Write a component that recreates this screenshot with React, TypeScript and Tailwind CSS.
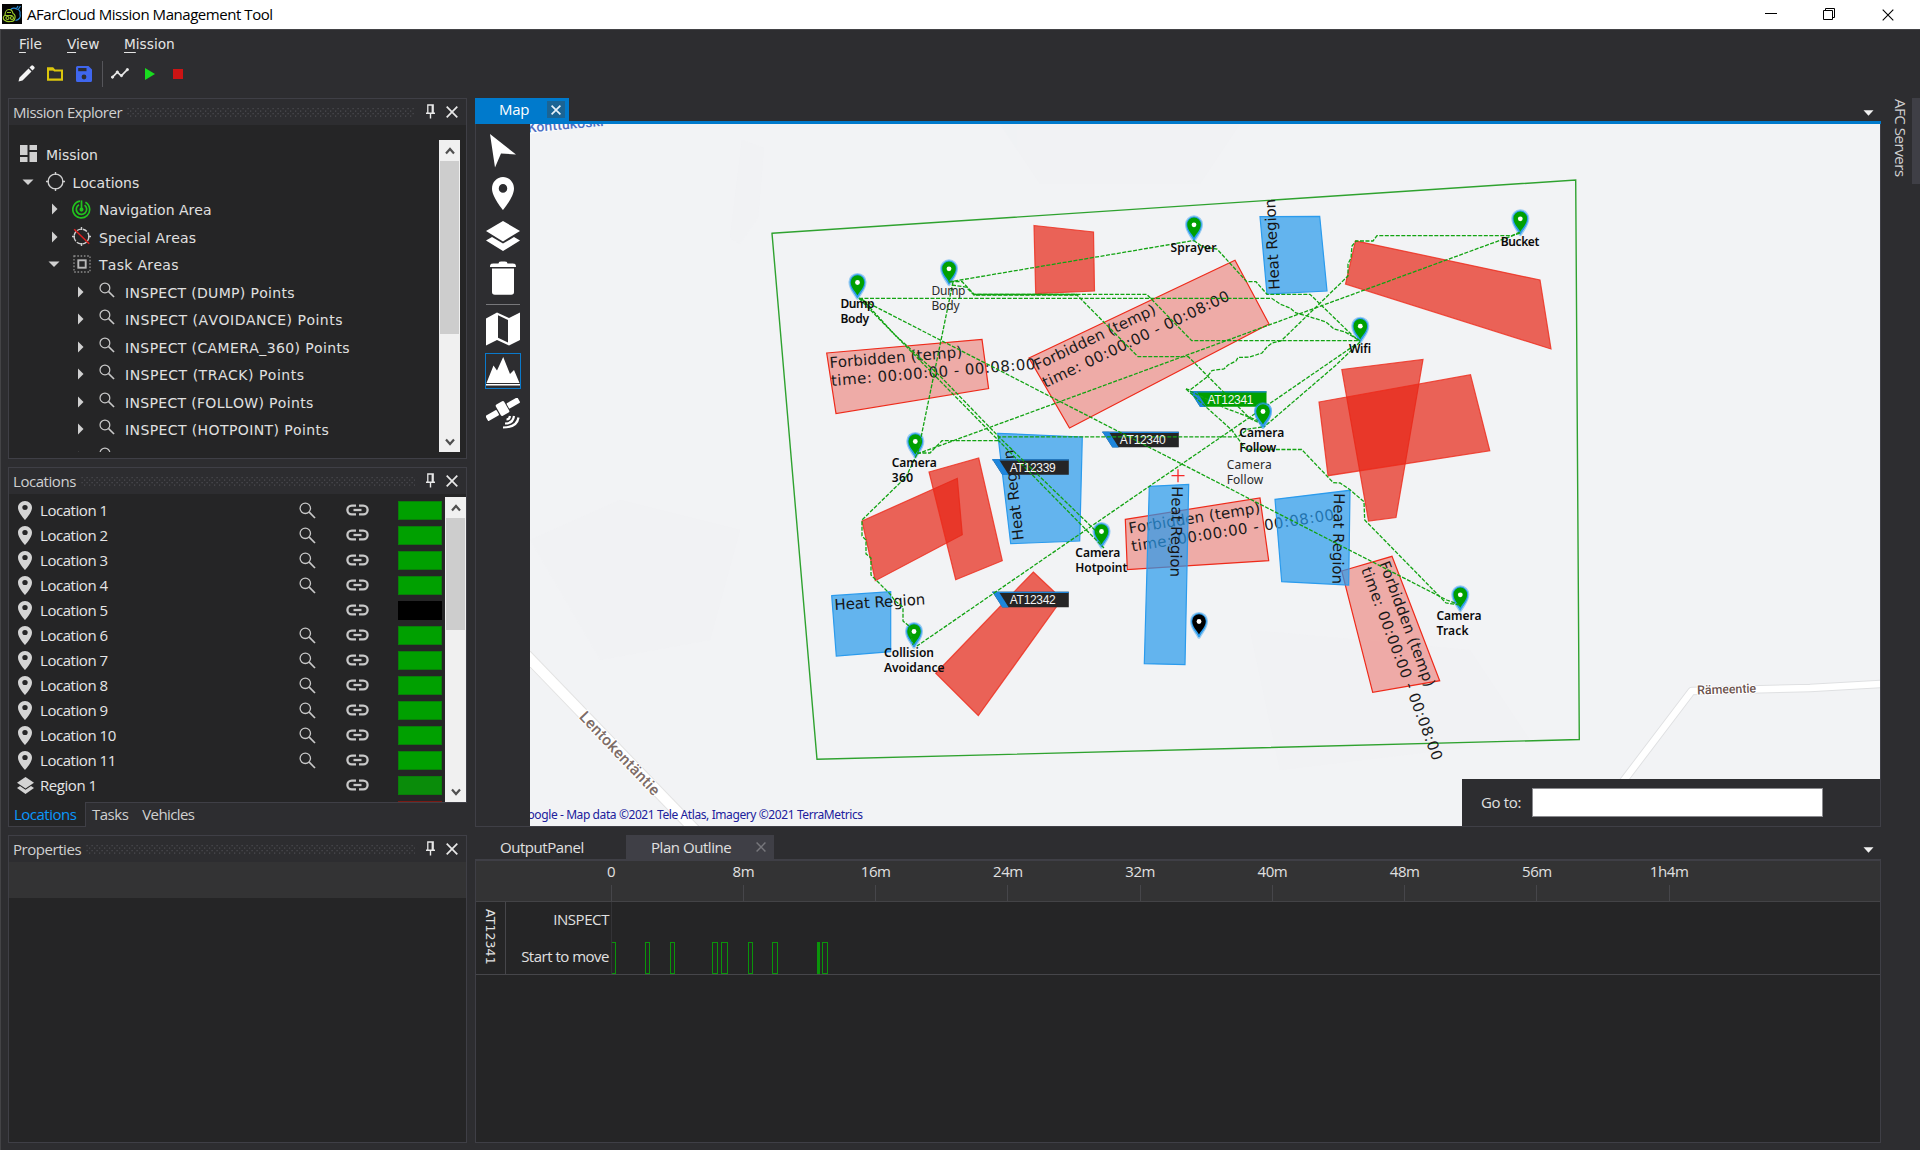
import React from "react";

type Pt = [number, number];

const SANS = "font-['Open_Sans','Noto_Sans',sans-serif]";
const WIDE = "font-['DejaVu_Sans',sans-serif]";

/* ---------- small icons ---------- */

const PinGlyph = ({ w, h, color }: { w: number; h: number; color: string }) => (
  <svg width={w} height={h} viewBox="5 2 14 20" preserveAspectRatio="none" fill={color}>
    <path d="M12 2C8.13 2 5 5.13 5 9c0 5.25 7 13 7 13s7-7.75 7-13c0-3.87-3.13-7-7-7zm0 9.6a2.7 2.7 0 1 1 0-5.4 2.7 2.7 0 0 1 0 5.4z" />
  </svg>
);

const Magnifier = ({ size = 17 }: { size?: number }) => (
  <svg width={size} height={size} viewBox="0 0 17 17" fill="none" stroke="#c8c8c8">
    <circle cx="6.3" cy="6.3" r="5.2" strokeWidth="1.3" />
    <path d="M10.2 10.2L16 16" strokeWidth="1.7" />
  </svg>
);

const ChainLink = () => (
  <svg width="23" height="12" viewBox="0 0 23 12" fill="none" stroke="#c8c8c8" strokeWidth="2.3">
    <path d="M10 1.6H5.8a4.4 4.4 0 0 0 0 8.8H10M13 1.6h4.2a4.4 4.4 0 0 1 0 8.8H13" />
    <path d="M7.5 6h8" />
  </svg>
);

const Arrow = ({ open }: { open?: boolean }) =>
  open ? (
    <svg width="12" height="8" viewBox="0 0 12 8"><path d="M0.5 1.5h11L6 7z" fill="#d0d0d0" /></svg>
  ) : (
    <svg width="7" height="12" viewBox="0 0 7 12"><path d="M1 0.5v11L6.5 6z" fill="#d0d0d0" /></svg>
  );

const Chevron = ({ up }: { up?: boolean }) => (
  <svg width="10" height="8" viewBox="0 0 10 8" fill="none" stroke="#505050" strokeWidth="2.2">
    <path d={up ? "M1 6.5L5 2l4 4.5" : "M1 1.5L5 6l4-4.5"} />
  </svg>
);

const Cross = ({ size, color, width = 1.6 }: { size: number; color: string; width?: number }) => (
  <svg width={size} height={size} viewBox="0 0 12 12" stroke={color} strokeWidth={width}>
    <path d="M0.7 0.7l10.6 10.6M11.3 0.7L0.7 11.3" />
  </svg>
);

const Thumbtack = () => (
  <svg width="9" height="15" viewBox="0 0 9 15" fill="none" stroke="#e8e8e8">
    <path d="M1.8 9V1h5.4v8" strokeWidth="1.3" />
    <path d="M6.3 1v8" strokeWidth="1.4" />
    <path d="M0 9.2h9M4.5 9.2V14.6" strokeWidth="1.4" />
  </svg>
);

const DropTriangle = () => (
  <svg width="11" height="6" viewBox="0 0 11 6"><path d="M0.5 0.3h10L5.5 5.8z" fill="#f1f1f1" /></svg>
);

const MissionIcon = () => (
  <svg width="17" height="17" viewBox="0 0 17 17" fill="#d0d0d0">
    <path d="M0 0h7.5v10H0zM9.5 0H17v5H9.5zM0 12h7.5v5H0zM9.5 7H17v10H9.5z" />
  </svg>
);

const TargetIcon = ({ slashed }: { slashed?: boolean }) => (
  <svg width="19" height="19" viewBox="0 0 19 19" fill="none" stroke="#cfcfcf" strokeWidth="1.4">
    <circle cx="9.5" cy="9.5" r="7.4" strokeDasharray={slashed ? "4.6 1.4" : undefined} />
    <path d="M9.5 0v3M9.5 16v3M0 9.5h3M16 9.5h3" />
    {slashed && <path d="M2.2 2.2l15 14.6" stroke="#e02020" strokeWidth="1.5" />}
  </svg>
);

const RadarIcon = () => (
  <svg width="19" height="19" viewBox="0 0 19 19" fill="none" stroke="#22c31e" strokeWidth="1.7">
    <path d="M8 1.2a8.4 8.4 0 1 0 5.4 1" />
    <path d="M9.5 9.5V0.4" />
    <path d="M7 4.7a5.2 5.2 0 1 0 5.6 .4" />
    <circle cx="9.5" cy="9.6" r="1.2" fill="#22c31e" />
  </svg>
);

const SelectIcon = () => (
  <svg width="18" height="18" viewBox="0 0 18 18" fill="none" stroke="#b8b8b8">
    <rect x="1" y="1" width="16" height="16" strokeWidth="1.3" strokeDasharray="1.6 1.7" stroke="#8c8c8c" />
    <rect x="5.3" y="5.3" width="7.4" height="7.4" strokeWidth="1.9" />
  </svg>
);

const LayersGlyph = ({ w, h, color }: { w: number; h: number; color: string }) => (
  <svg width={w} height={h} viewBox="0 0 34 30" fill={color} preserveAspectRatio="none">
    <path d="M17 0l17 10-17 10.4L0 10z" />
    <path d="M0 19.5l6-3.4 11 6.5 11-6.5 6 3.4L17 30z" />
  </svg>
);

/* ---------- title, menu, toolbar ---------- */

const TitleBar = () => (
  <div className="flex h-[29px] shrink-0 items-center bg-white pl-[2px] text-black">
    <svg width="20" height="20" viewBox="0 0 20 20" className="mb-px">
      <rect width="20" height="20" fill="#050505" />
      <g fill="none" strokeWidth="1.2">
        <path d="M8.500 6c1-2 4.500-2.500 6-1 3 .5 4 2.500 3.500 5 1 3-.5 6-4.500 6.500" stroke="#2a8fd8" />
        <path d="M14.500 4.500l1.500-2.500M16.500 5l2-3" stroke="#2a8fd8" />
        <path d="M3 16.500c-2.500-1-2-4.500 0-5 0-3 1.500-6 4-6 2.500 0 3.500 1.500 4 4 2 1 2.500 3.500 1.500 6-.5 1.500-2 2-4 2-2 .3-4 0-5.500-1z" stroke="#9ccb2a" />
        <path d="M2.500 11.500h8M5 8.500h4" stroke="#9ccb2a" />
        <circle cx="5.500" cy="14" r="1.500" stroke="#9ccb2a" />
        <circle cx="10" cy="14" r="1.500" stroke="#9ccb2a" />
      </g>
    </svg>
    <span className={`${SANS} ml-[5px] text-[15px] tracking-[-0.45px]`}>AFarCloud Mission Management Tool</span>
    <div className="ml-auto flex h-full items-center pr-[26px]">
      <svg width="12" height="13" viewBox="0 0 12 13"><path d="M0 5.500h12" stroke="#000" /></svg>
      <svg width="13" height="13" viewBox="0 0 13 13" className="ml-[46px]" fill="none" stroke="#000">
        <path d="M0.500 2.500h9v9h-9zM2.500 2.500v-2h9v9h-2" />
      </svg>
      <div className="ml-[46px]"><Cross size={12} color="#000" width={1.1} /></div>
    </div>
  </div>
);

const MenuBar = () => (
  <div className={`${WIDE} flex h-[28px] items-center pl-[18px] text-[13.700px] text-[#e4e4e4]`}>
    {["File", "View", "Mission"].map((m, i) => (
      <span key={m} className={i === 0 ? "w-[48px]" : i === 1 ? "w-[57px]" : ""}>
        <span className="underline underline-offset-[3px]">{m[0]}</span>{m.slice(1)}
      </span>
    ))}
  </div>
);

const ToolBar = () => (
  <div className="flex h-[31px] items-center pl-[17px]">
    <svg width="17" height="17" viewBox="0 0 17 17" fill="#f4f4f4">
      <path d="M0.500 16.500l1-4 9-9 3 3-9 9zM11.500 2.500l1.700-1.700a1.500 1.500 0 0 1 2 0l1 1a1.500 1.500 0 0 1 0 2L14.500 5.500z" />
    </svg>
    <svg width="16" height="14" viewBox="0 0 17 15" className="ml-[12px]" fill="none" stroke="#dcc60c" strokeWidth="2.2">
      <path d="M1 1.500h5l2 2.200h8v9.800H1z" /><path d="M1 2.800h6" />
    </svg>
    <svg width="16" height="16" viewBox="0 0 16 16" className="ml-[13px]" fill="#3f66ee">
      <path d="M1.500 0h11L16 3.500v11a1.500 1.500 0 0 1-1.500 1.500h-13A1.500 1.500 0 0 1 0 14.500v-13A1.500 1.500 0 0 1 1.500 0z" />
      <path d="M2.200 2h8.300v3.200H2.200z" fill="#2d2d30" /><circle cx="8" cy="11" r="2.400" fill="#2d2d30" />
    </svg>
    <div className="ml-[10px] h-[26px] w-px bg-[#55555a]" />
    <svg width="18" height="11" viewBox="0 0 18 11" className="ml-[8px]" stroke="#e8e8e8" fill="#e8e8e8">
      <path d="M1.500 9.200l4.800-5 4 3.600 6-6.200" fill="none" strokeWidth="1.700" />
      <circle cx="1.500" cy="9.200" r="1.100" /><circle cx="6.300" cy="4" r="1.100" /><circle cx="10.500" cy="7.600" r="1.100" /><circle cx="16.400" cy="1.600" r="1.100" />
    </svg>
    <svg width="10" height="12" viewBox="0 0 10 12" className="ml-[16px]"><path d="M0 0v12l10-6z" fill="#19dc1f" /></svg>
    <div className="ml-[18px] h-[10px] w-[10px] bg-[#cc1414]" />
  </div>
);

/* ---------- left column ---------- */

const PanelHeader = ({ title, id }: { title: string; id: string }) => (
  <div className={`${SANS} flex h-[26px] shrink-0 items-center bg-[#2d2d30] pl-[4px] pr-[8px] text-[15px] tracking-[-0.450px] text-[#d0d0d0]`}>
    <span className="pb-px leading-[24px]">{title}</span>
    <svg className="ml-[5px] mr-[11px] h-[9px] min-w-0 flex-1" width="100%" height="9">
      <defs>
        <pattern id={id} width="5" height="5" patternUnits="userSpaceOnUse">
          <rect x="0.500" y="0" width="1.200" height="1.200" fill="#4c4c51" />
          <rect x="3" y="2.500" width="1.200" height="1.200" fill="#4c4c51" />
        </pattern>
      </defs>
      <rect width="100%" height="9" fill={`url(#${id})`} />
    </svg>
    <div className="mb-px flex items-center gap-[11px]">
      <Thumbtack />
      <Cross size={12} color="#e8e8e8" width={1.700} />
    </div>
  </div>
);

const ScrollBar = ({ thumb }: { thumb: string }) => (
  <div className="flex w-[21px] shrink-0 flex-col items-center bg-[#f0f0f0]">
    <div className="flex h-[21px] shrink-0 items-center"><Chevron up /></div>
    <div className={`w-[19px] bg-[#cdcdcd] ${thumb}`} />
    <div className="mt-auto flex h-[21px] items-center"><Chevron /></div>
  </div>
);

type TreeItem = { level: number; label: string; open?: boolean; icon: React.ReactNode; spacing?: string };
const TASK_KINDS: [string, string][] = [
  ["DUMP", "tracking-[0.330px]"],
  ["AVOIDANCE", "tracking-[0.490px]"],
  ["CAMERA_360", "tracking-[0.380px]"],
  ["TRACK", "tracking-[0.510px]"],
  ["FOLLOW", "tracking-[0.330px]"],
  ["HOTPOINT", "tracking-[0.400px]"],
];
const TREE: TreeItem[] = [
  { level: 1, label: "Locations", open: true, icon: <TargetIcon /> },
  { level: 2, label: "Navigation Area", icon: <RadarIcon /> },
  { level: 2, label: "Special Areas", icon: <TargetIcon slashed />, spacing: "tracking-[0.200px]" },
  { level: 2, label: "Task Areas", open: true, icon: <SelectIcon />, spacing: "tracking-[0.300px]" },
  ...TASK_KINDS.map(([n, spacing]) => ({
    level: 3,
    label: `INSPECT (${n}) Points`,
    icon: <div className="-ml-px -mt-[4px]"><Magnifier size={16} /></div>,
    spacing,
  })),
  { level: 3, label: "", icon: <div className="-ml-px -mt-[4px]"><Magnifier size={16} /></div> },
];
const INDENT = ["", "pl-[9.500px]", "pl-[36px]", "pl-[62px]"];

const MissionExplorer = () => (
  <section className="flex h-[361px] shrink-0 flex-col border border-[#3f3f46] bg-[#252526]">
    <PanelHeader title="Mission Explorer" id="grip-a" />
    <div className="mb-[6px] mt-[15px] flex min-h-0 flex-1 pr-[6px]">
      <div className={`${WIDE} min-w-0 flex-1 overflow-hidden pt-[1.500px] text-[14px] text-[#e0e0e0] [font-kerning:none]`}>
        <div className="flex h-[27.500px] items-center pl-[11px]">
          <div className="-mt-[3px] w-[26px]"><MissionIcon /></div>
          <span className="mt-px">Mission</span>
        </div>
        {TREE.map((t) => (
          <div key={t.label} className={`flex h-[27.500px] items-center ${INDENT[t.level]}`}>
            <div className="-mt-[2px] flex w-[18px] justify-center"><Arrow open={t.open} /></div>
            <div className="-mt-[2px] ml-[5px] flex w-[27px] justify-center">{t.icon}</div>
            <span className={`ml-[4px] mt-px whitespace-nowrap ${t.spacing ?? ""}`}>{t.label}</span>
          </div>
        ))}
      </div>
      <ScrollBar thumb="h-[173px]" />
    </div>
  </section>
);

const LocationRow = ({ label, swatch, search, region }: { label: string; swatch: string; search?: boolean; region?: boolean }) => (
  <div className="flex h-[25px] shrink-0 items-center pl-[7px]">
    <div className="flex w-[18px] justify-center">
      {region ? <LayersGlyph w={17} h={17} color="#d4d4d4" /> : <PinGlyph w={14} h={19} color="#d4d4d4" />}
    </div>
    <span className="ml-[6px] w-[257px] whitespace-nowrap">{label}</span>
    <div className="flex w-[20px] justify-center">{search && <Magnifier />}</div>
    <div className="ml-[28px] flex w-[24px] justify-center"><ChainLink /></div>
    <div className={`ml-[29px] h-[19px] w-[44px] ${swatch}`} />
  </div>
);

const LocationsPanel = () => (
  <section className="mt-[8px] flex h-[360px] shrink-0 flex-col">
    <div className="flex h-[335px] flex-col border border-b-0 border-[#3f3f46] bg-[#252526]">
      <PanelHeader title="Locations" id="grip-b" />
      <div className="flex min-h-0 flex-1 pt-[3px]">
        <div className={`${SANS} flex min-w-0 flex-1 flex-col overflow-hidden pt-[0.500px] text-[15px] tracking-[-0.450px] text-[#e6e6e6]`}>
          {Array.from({ length: 11 }, (_, i) => (
            <LocationRow
              key={i}
              label={`Location ${i + 1}`}
              search={i !== 4}
              swatch={i === 4 ? "bg-black" : "border border-[#0a7d0a] bg-[#00a000]"}
            />
          ))}
          <LocationRow label="Region 1" region swatch="border border-[#0a7d0a] bg-[#0a8c0a]" />
          <LocationRow label="" region swatch="border border-[#7a1a14] bg-[#9a2018]" />
        </div>
        <ScrollBar thumb="h-[112px]" />
      </div>
    </div>
    <div className={`${SANS} flex h-[25px] text-[15px] tracking-[-0.500px] text-[#d0d0d0]`}>
      <div className="w-[78px] border border-t-0 border-[#3f3f46] bg-[#252526] pl-[5px] leading-[24px] text-[#0a97fb]">Locations</div>
      <div className="flex-1 border-t border-[#3f3f46] pl-[6px] leading-[23px]">
        <span>Tasks</span><span className="ml-[14px] tracking-[-0.600px]">Vehicles</span>
      </div>
    </div>
  </section>
);

const PropertiesPanel = () => (
  <section className="mt-[8px] flex h-[308px] shrink-0 flex-col border border-[#3f3f46] bg-[#252526]">
    <PanelHeader title="Properties" id="grip-c" />
    <div className="h-[36px] bg-[#333334]" />
  </section>
);

/* ---------- map ---------- */

const pts = (p: Pt[]) => p.map((q) => q.join(",")).join(" ");

const FORBIDDEN: Pt[][] = [
  [[826.7, 353], [982, 339.3], [988.6, 388.6], [836, 413.5]],
  [[1029, 358], [1235, 260.3], [1269, 324], [1069.5, 428]],
  [[1125.3, 519.3], [1260, 498], [1268.7, 560.7], [1127.3, 569.7]],
  [[1341.7, 571], [1392, 556.3], [1439.7, 680.7], [1372.7, 692.3]],
];
const FORBIDDEN_TEXT = [
  { a: [830, 368], b: [831.5, 386], r: -4.8 },
  { a: [1037, 370.5], b: [1045.5, 388], r: -25.5 },
  { a: [1129.5, 533.5], b: [1132.3, 551.5], r: -9 },
  { a: [1379, 563.5], b: [1361, 569.5], r: 69.4 },
];
const RED: Pt[][] = [
  [[1034, 225.5], [1093.5, 232], [1094.5, 291], [1035.7, 293.5]],
  [[1355.5, 240.8], [1540, 280], [1551, 349], [1345.5, 284]],
  [[1341.8, 369.5], [1423, 359.5], [1396, 517.5], [1368.5, 521]],
  [[1319, 402], [1470.5, 374.7], [1489.8, 450.8], [1328, 475.7]],
  [[862, 521], [957.3, 478.3], [962.3, 534.7], [875.3, 580.7]],
  [[929, 472], [978.7, 458], [1002.3, 560.7], [955.7, 579.7]],
  [[1033.3, 572], [1062, 599], [978.3, 715.7], [935.7, 673.3]],
];
const HEAT: Pt[][] = [
  [[1260, 216.7], [1319.7, 216.3], [1327, 291], [1267, 294]],
  [[997.7, 433.3], [1082.3, 437], [1079.7, 541], [1010.7, 543.7]],
  [[831.7, 595.7], [890.7, 591.7], [890.7, 651.7], [836.3, 656]],
  [[1149.3, 486.3], [1188.7, 484.3], [1185, 664.7], [1144.3, 663.7]],
  [[1275, 499.3], [1350, 490.3], [1348.7, 585], [1281.7, 581.7]],
];
const HEAT_TEXT = [
  { x: 1279.7, y: 289.5, r: -93 },
  { x: 1023.7, y: 539.7, r: -96.4 },
  { x: 834.7, y: 610, r: -3.5 },
  { x: 1172, y: 486, r: 91 },
  { x: 1334, y: 493, r: 91 },
];
const ROUTES: Pt[][] = [
  [[948.7, 282], [1193.7, 240.5]],
  [[950, 281.5], [962, 281.5], [974, 294.3], [1146.7, 294.3], [1191.7, 340.7], [1360, 340.7]],
  [[952, 285], [966, 287], [974, 295], [1077, 295], [1138, 356.7], [1188.3, 356.7], [1250, 418.5], [1262, 424]],
  [[859, 298.3], [1271.7, 298.3], [1280, 304], [1290, 308], [1296, 313], [1306, 315.7], [1320, 320], [1326, 322], [1334, 329], [1345, 332], [1352, 336], [1360, 341]],
  [[859, 298.3], [1446.7, 600], [1460, 605]],
  [[859, 298.3], [1104, 548]],
  [[862, 299], [895, 335], [940, 376], [1000, 438], [1099, 534]],
  [[953, 282], [918, 452], [906, 477], [862, 520], [862, 536], [866, 540], [866, 554], [871, 558], [871, 575], [890, 594], [895, 601], [903, 607], [903, 621], [909, 626], [913, 645]],
  [[917, 454], [1520, 233]],
  [[917, 453], [930, 453], [942, 440.7], [998, 440.7], [999, 436.8], [1238, 436.8], [1248, 429], [1262, 427]],
  [[1355, 345], [917, 646]],
  [[1360, 342], [1335, 366], [1264, 427]],
  [[1193.7, 240.5], [1203, 247], [1217, 249], [1246.7, 281.7], [1256, 281.7], [1267, 294.3], [1310, 294.3], [1353, 336], [1360, 341]],
  [[1520, 232], [1512, 235.7], [1377, 235.7], [1373, 241], [1356, 241], [1352, 246], [1351, 258], [1348, 264], [1348, 276], [1281, 341], [1272, 343], [1267, 347], [1262, 353], [1250, 357], [1238, 357.5], [1236, 361], [1228, 365], [1224, 369], [1212, 370.5], [1207, 377], [1190, 390], [1186, 389]],
  [[1186, 389], [1231.7, 430], [1246, 449.5], [1301.7, 449.5], [1333.3, 482.7], [1340, 483], [1349, 489], [1364, 501.7], [1364.7, 520], [1446, 603], [1460, 605]],
  [[1190, 391], [1225, 408], [1262, 422]],
];
const PINS: Pt[] = [
  [857.5, 283], [949, 269.3], [915.3, 442], [1194, 225.3], [1520.3, 219.3], [1360.3, 326.7],
  [1263, 412], [1101.5, 532], [914, 632], [1460.3, 595.3],
];
type Label = { x: number; y: number; lines: [string, number][]; light?: boolean };
const LABELS: Label[] = [
  { x: 840.5, y: 308, lines: [["Dump", 34], ["Body", 28.5]] },
  { x: 931.5, y: 294.5, lines: [["Dump", 34], ["Body", 28]], light: true },
  { x: 891.7, y: 466.5, lines: [["Camera", 45], ["360", 21.5]] },
  { x: 1170.5, y: 251.5, lines: [["Sprayer", 46]] },
  { x: 1500.7, y: 245.5, lines: [["Bucket", 38.7]] },
  { x: 1349, y: 352.5, lines: [["Wifi", 22]] },
  { x: 1239.3, y: 436.5, lines: [["Camera", 45], ["Follow", 37]] },
  { x: 1226.7, y: 469, lines: [["Camera", 45], ["Follow", 36.5]], light: true },
  { x: 1075.3, y: 556.5, lines: [["Camera", 45], ["Hotpoint", 52]] },
  { x: 884, y: 656.5, lines: [["Collision", 50], ["Avoidance", 60.5]] },
  { x: 1436.5, y: 620.3, lines: [["Camera", 45], ["Track", 32]] },
];
const TAGS = [
  { x: 1102.3, y: 431.7, t: "AT12340", fill: "#252526" },
  { x: 992.3, y: 459.3, t: "AT12339", fill: "#252526" },
  { x: 992.3, y: 591.7, t: "AT12342", fill: "#252526" },
  { x: 1190, y: 391.3, t: "AT12341", fill: "#00a000" },
];

const MapPin = ({ at: [x, y], color }: { at: Pt; color: string }) => {
  const d = "M0 15C-2.500 10-7.300 6-7.300-1A7.300 7.300 0 0 1 7.300-1C7.300 6 2.500 10 0 15z";
  return (
    <g transform={`translate(${x} ${y})`}>
      <path d={d} fill="#2b9bed" stroke="#2b9bed" strokeWidth="3.500" strokeLinejoin="round" opacity="0.450" />
      <path d={d} fill="#2b9bed" stroke="#2b9bed" strokeWidth="1" strokeLinejoin="round" />
      <path d="M0 12.500C-2 8.500-6.800 5-6.800-1A6.800 6.800 0 0 1 6.800-1C6.800 5 2 8.500 0 12.500z" fill={color} />
      <circle r="2.400" cy="-0.500" fill="#fff" />
    </g>
  );
};

const MapView = () => (
  <svg width="1350" height="702" viewBox="530 124 1350 702" className="block bg-[#f2f3f5]">
    <g fill="#eef0f2" opacity="0.250">
      <path d="M742 140l22 8-6 70-18 26-10 -6z" />
      <path d="M530 540l90-40 120 30-30 110-110 20z" />
      <path d="M1250 630l220 20 60 90-250 30z" />
      <path d="M1000 124h240l-40 60h-160z" />
    </g>
    <g fill="none" strokeLinejoin="round">
      <path d="M520 648.600L710 845.600" stroke="#e3e3e3" strokeWidth="12" />
      <path d="M520 648.600L710 845.600" stroke="#fff" strokeWidth="10" />
      <path d="M1612 796L1691.700 691L1810 688L1890 683.500" stroke="#dfe0e2" strokeWidth="8.500" />
      <path d="M1612 796L1691.700 691L1810 688L1890 683.500" stroke="#fff" strokeWidth="6.600" />
    </g>
    <path d="M530 124h72l-72 10z" fill="#fff" opacity="0.700" />
    <text transform="translate(528 132.500) rotate(-5)" className="font-['Roboto',sans-serif] text-[14px] font-medium" fill="#4d6fc4" textLength="76">Konttukoski</text>
    <text transform="translate(578.500 717.500) rotate(46.500)" className="font-['Roboto',sans-serif] text-[15.500px] font-medium" fill="#7d6c67" stroke="#fff" strokeWidth="2" paintOrder="stroke" textLength="109">Lentokentäntie</text>
    <text transform="translate(1697.300 694.500) rotate(-2)" className="font-['Roboto',sans-serif] text-[12.500px] font-medium" fill="#6d5550" stroke="#fff" strokeWidth="2" paintOrder="stroke" textLength="59">Rämeentie</text>

    <polygon points="772,233.300 1575.700,180 1579.300,739.500 817,759.300" fill="none" stroke="#2fa22f" strokeWidth="1.400" />

    <g fill="#e72616" stroke="#ee2a1a" strokeWidth="1.200">
      {FORBIDDEN.map((p, i) => <polygon key={i} points={pts(p)} fillOpacity="0.350" />)}
      {RED.map((p, i) => <polygon key={i} points={pts(p)} fillOpacity="0.710" strokeOpacity="0.800" />)}
    </g>
    <g className="font-['DejaVu_Sans',sans-serif] text-[15px]" fill="#1a1a1a">
      {FORBIDDEN_TEXT.map(({ a, b, r }, i) => (
        <g key={i}>
          <text transform={`translate(${a[0]} ${a[1]}) rotate(${r})`} textLength="133">Forbidden (temp)</text>
          <text transform={`translate(${b[0]} ${b[1]}) rotate(${r})`} textLength="205">time: 00:00:00 - 00:08:00</text>
        </g>
      ))}
    </g>
    <g fill="#2799eb" stroke="#2b9bed" strokeWidth="1.200">
      {HEAT.map((p, i) => <polygon key={i} points={pts(p)} fillOpacity="0.700" />)}
    </g>
    <g className="font-['DejaVu_Sans',sans-serif] text-[15px]" fill="#151515">
      {HEAT_TEXT.map(({ x, y, r }, i) => (
        <text key={i} transform={`translate(${x} ${y}) rotate(${r})`} textLength="91">Heat Region</text>
      ))}
    </g>

    {PINS.map((p, i) => <MapPin key={i} at={p} color="#00a000" />)}
    <MapPin at={[1199, 622]} color="#000" />

    {TAGS.map(({ x, y, t, fill }) => (
      <g key={t} transform={`translate(${x} ${y})`}>
        <path d="M0 0H76.500V15.500H10z" fill={fill} />
        <path d="M0 0H6.500L16.500 15.700H10z" fill="#1e86dc" />
        <path d="M0 0H76.500V1.300H0z" fill="#1e86dc" />
      </g>
    ))}
    <g fill="none" stroke="#12a312" strokeWidth="1.300" strokeDasharray="4 1.500">
      {ROUTES.map((p, i) => <polyline key={i} points={pts(p)} />)}
    </g>
    <path d="M974 294.500H1077" stroke="#12a312" strokeWidth="1.300" />
    {TAGS.map(({ x, y, t }) => (
      <text key={t} x={x + 17.500} y={y + 12.200} className="font-['Liberation_Sans',sans-serif] text-[12px]" fill="#f4f4f4" textLength="46">{t}</text>
    ))}
    <MapPin at={PINS[6]} color="#00a000" />
    {LABELS.map(({ x, y, lines, light }, i) => (
      <g key={i} className={light ? "font-['Noto_Sans',sans-serif] text-[12px]" : "font-['Noto_Sans',sans-serif] text-[12px] font-semibold"} fill={light ? "#2a2a2a" : "#0a0a0a"}>
        {lines.map(([t, w], j) => <text key={t} x={x} y={y + j * 15} textLength={w}>{t}</text>)}
      </g>
    ))}
    <path d="M1171.500 475.700h13M1178 469.200v13" stroke="#f52a2a" strokeWidth="1.300" />
    <text x="527.500" y="819" className="font-['Noto_Sans',sans-serif] text-[12px]" fill="#20209c" textLength="335.500">oogle - Map data ©2021 Tele Atlas, Imagery ©2021 TerraMetrics</text>
  </svg>
);

const MapTools = () => (
  <div className="flex w-[54px] shrink-0 flex-col items-center">
    <svg width="28" height="34" viewBox="0 0 28 34" fill="#fff" className="mt-[10px]"><path d="M1 0L27 20.500L12 19.500L6 33.500z" /></svg>
    <div className="mt-[9px] h-[34px]"><PinGlyph w={22} h={33} color="#fff" /></div>
    <div className="mt-[10px] h-[30px]"><LayersGlyph w={34} h={30} color="#fff" /></div>
    <svg width="26" height="34" viewBox="0 0 26 34" fill="#fff" className="mt-[10px]">
      <path d="M0 6c0-3 1-3.500 4-3.500h4.500C9 .8 9.500.500 13 .500s4 .3 4.500 2H22c3 0 4 .5 4 3.500z" />
      <path d="M2 7.500h22V31a2.800 2.800 0 0 1-2.800 2.800H4.800A2.800 2.800 0 0 1 2 31z" />
    </svg>
    <div className="mt-[9px] h-px w-[34px] bg-[#77777a]" />
    <svg width="34" height="34" viewBox="0 0 34 34" fill="#fff" className="mt-[7px]">
      <path d="M0 6.500L11 .500L23 6L34 .500V28L23 33.500L11 28L0 33.500z" />
      <path d="M12 3.300L22 8V30.500L12 25.800z" fill="#2d2d30" />
    </svg>
    <div className="mt-[7px] flex h-[36px] w-[36px] items-end justify-center border border-[#0a7acc] pb-[2px]">
      <svg width="34" height="29" viewBox="0 0 34 29" fill="#fff">
        <path d="M0.500 26L7.500 8.500L11 13.500L17.200 0L24 17L28 13L33.500 26z" /><path d="M0 27h34v1.400H0z" />
      </svg>
    </div>
    <svg width="34" height="31" viewBox="0 0 34 31" fill="#fff" className="mt-[9px]">
      <rect x="-4.800" y="-6.500" width="9.600" height="13" rx="1.500" transform="translate(16.500 10.500) rotate(-30)" />
      <rect x="-6.300" y="-3" width="12.600" height="6" rx="1" transform="translate(27.300 5) rotate(-30)" />
      <rect x="-6.300" y="-3" width="12.600" height="6" rx="1" transform="translate(6.300 17.500) rotate(-30)" />
      <g fill="none" stroke="#fff" strokeWidth="2.200">
        <path d="M20.500 21.500q3 0 3.500-3.500" /><path d="M19 25.500q8 0 9-7.500" /><path d="M17 29.500q14 0 15.500-10" />
      </g>
    </svg>
  </div>
);

const MapPane = () => (
  <section className="flex h-[729px] shrink-0 flex-col">
    <div className={`${SANS} flex h-[23px] items-center`}>
      <div className="flex h-full w-[94px] items-center bg-[#007acc] pr-[4px] text-[15px] tracking-[-0.300px] text-white">
        <span className="ml-[24px]">Map</span>
        <div className="ml-auto flex h-[17px] w-[18px] items-center justify-center bg-[#1b6494]"><Cross size={10} color="#e8f2fa" width={2} /></div>
      </div>
      <div className="ml-auto mr-[7px] mt-[6px]"><DropTriangle /></div>
    </div>
    <div className="h-[3px] shrink-0 bg-[#007acc]" />
    <div className="flex h-[703px] border border-t-0 border-[#3f3f46]">
      <MapTools />
      <div className="relative">
        <MapView />
        <div className={`${SANS} absolute bottom-0 right-0 flex h-[47px] w-[418px] items-center bg-[#2d2d30] pl-[19px] text-[15px] tracking-[-0.350px] text-[#e0e0e0]`}>
          <span className="w-[51px] whitespace-nowrap pb-px">Go to:</span>
          <div className="mb-px h-[29px] w-[291px] border border-[#8a8a8e] bg-white" />
        </div>
      </div>
    </div>
  </section>
);

/* ---------- timeline ---------- */

const TICKS = ["0", "8m", "16m", "24m", "32m", "40m", "48m", "56m", "1h4m"];
/* [gap before, width] of each move block, in pixels from the origin of the axis */
const MOVES: Pt[] = [[0, 4], [29, 5], [20, 5], [37, 6], [3, 7], [20, 5], [19, 6], [39, 3], [2, 6]];

const Timeline = () => (
  <section className="mt-[8px] flex min-h-0 flex-col">
    <div className={`${SANS} flex h-[24px] shrink-0 items-center text-[15px] tracking-[-0.450px] text-[#e0e0e0]`}>
      <span className="w-[151px] pl-[25px]">OutputPanel</span>
      <div className="flex h-full w-[148px] items-center bg-[#3f3f46] pl-[25px]">
        <span>Plan Outline</span>
        <div className="ml-auto mr-[8px]"><Cross size={10} color="#77777c" width={1.800} /></div>
      </div>
      <div className="ml-auto mr-[7px] mt-[5px]"><DropTriangle /></div>
    </div>
    <div className={`${SANS} flex h-[284px] flex-col border border-[#3f3f46] border-t-2 bg-[#252526] text-[15px] tracking-[-0.420px] text-[#e0e0e0]`}>
      <div className="flex h-[41px] shrink-0 border-b border-[#434346] bg-[#333334] pl-[69px]">
        {TICKS.map((t) => (
          <div key={t} className="flex w-[132.250px] shrink-0 flex-col items-center">
            <span className="h-[24px] leading-[20px]">{t}</span>
            <div className="w-px flex-1 bg-[#46464a]" />
          </div>
        ))}
      </div>
      <div className="flex h-[73px] shrink-0 border-b border-[#46464a]">
        <div className="flex w-[30px] items-center justify-center border-r border-[#46464a] pb-[3px] pr-[2px]">
          <span className="font-['DejaVu_Sans',sans-serif] text-[12.500px] tracking-[0.100px] [writing-mode:vertical-rl]">AT12341</span>
        </div>
        <div className="flex w-[106px] flex-col items-end border-r border-[#333336] pr-[2px]">
          <span className="h-[36px] leading-[35px]">INSPECT</span>
          <span className="h-[36px] leading-[36px] tracking-[-0.500px]">Start to move</span>
        </div>
        <div className="flex items-end">
          {MOVES.map(([gap, w], i) => (
            <div
              key={i}
              className={`h-[32px] border border-[#0a940a] ${i === 0 ? "border-l-0" : ""} ${i === 7 ? "bg-[#0a940a]" : ""}`}
              style={{ marginLeft: gap, width: w }}
            />
          ))}
        </div>
      </div>
    </div>
  </section>
);

export default function App() {
  return (
    <div className="flex h-[1150px] w-[1920px] flex-col overflow-hidden bg-[#2d2d30]">
      <TitleBar />
      <div className="flex min-h-0 flex-1 flex-col border-l border-t border-[#434346]">
        <MenuBar />
        <ToolBar />
        <div className="mt-[9px] flex min-h-0 flex-1">
          <div className="ml-[7px] flex w-[459px] shrink-0 flex-col">
            <MissionExplorer />
            <LocationsPanel />
            <PropertiesPanel />
          </div>
          <div className="ml-[8px] flex w-[1406px] shrink-0 flex-col">
            <MapPane />
            <Timeline />
          </div>
          <div className={`${SANS} ml-auto flex h-[86px] text-[15px] tracking-[-0.450px] text-[#d0d0d0]`}>
            <span className="mr-px mt-px whitespace-nowrap leading-[21px] [writing-mode:vertical-rl]">AFC Servers</span>
            <div className="w-[8px] bg-[#3f3f46]" />
          </div>
        </div>
      </div>
    </div>
  );
}
